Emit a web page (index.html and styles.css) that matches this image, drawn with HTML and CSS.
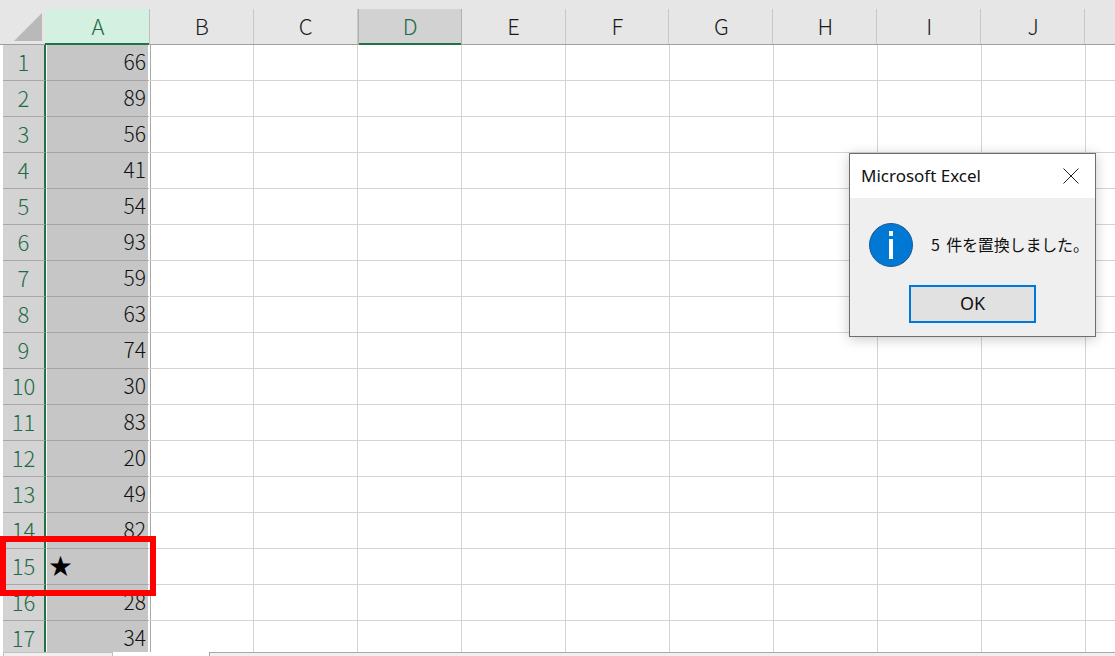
FILE: index.html
```html
<!DOCTYPE html>
<html lang="ja">
<head>
<meta charset="utf-8">
<title>Microsoft Excel</title>
<link rel="stylesheet" href="styles.css">
</head>
<body>
<main class="sheet">
  <div class="row head">
    <div class="corner"><svg class="corner-tri" width="28" height="28" viewBox="0 0 28 28"><path d="M0 28 L28 0 L28 28 Z"/></svg></div>
    <div class="ch ch-a">A</div><div class="ch">B</div><div class="ch">C</div><div class="ch ch-d">D</div><div class="ch">E</div><div class="ch">F</div><div class="ch">G</div><div class="ch">H</div><div class="ch">I</div><div class="ch">J</div><div class="ch ch-end"></div>
  </div>
  <div class="row"><div class="rh">1</div><div class="a num">66</div><div class="c"></div><div class="c"></div><div class="c"></div><div class="c"></div><div class="c"></div><div class="c"></div><div class="c"></div><div class="c"></div><div class="c"></div><div class="c end"></div></div>
  <div class="row"><div class="rh">2</div><div class="a num">89</div><div class="c"></div><div class="c"></div><div class="c"></div><div class="c"></div><div class="c"></div><div class="c"></div><div class="c"></div><div class="c"></div><div class="c"></div><div class="c end"></div></div>
  <div class="row"><div class="rh">3</div><div class="a num">56</div><div class="c"></div><div class="c"></div><div class="c"></div><div class="c"></div><div class="c"></div><div class="c"></div><div class="c"></div><div class="c"></div><div class="c"></div><div class="c end"></div></div>
  <div class="row"><div class="rh">4</div><div class="a num">41</div><div class="c"></div><div class="c"></div><div class="c"></div><div class="c"></div><div class="c"></div><div class="c"></div><div class="c"></div><div class="c"></div><div class="c"></div><div class="c end"></div></div>
  <div class="row"><div class="rh">5</div><div class="a num">54</div><div class="c"></div><div class="c"></div><div class="c"></div><div class="c"></div><div class="c"></div><div class="c"></div><div class="c"></div><div class="c"></div><div class="c"></div><div class="c end"></div></div>
  <div class="row"><div class="rh">6</div><div class="a num">93</div><div class="c"></div><div class="c"></div><div class="c"></div><div class="c"></div><div class="c"></div><div class="c"></div><div class="c"></div><div class="c"></div><div class="c"></div><div class="c end"></div></div>
  <div class="row"><div class="rh">7</div><div class="a num">59</div><div class="c"></div><div class="c"></div><div class="c"></div><div class="c"></div><div class="c"></div><div class="c"></div><div class="c"></div><div class="c"></div><div class="c"></div><div class="c end"></div></div>
  <div class="row"><div class="rh">8</div><div class="a num">63</div><div class="c"></div><div class="c"></div><div class="c"></div><div class="c"></div><div class="c"></div><div class="c"></div><div class="c"></div><div class="c"></div><div class="c"></div><div class="c end"></div></div>
  <div class="row"><div class="rh">9</div><div class="a num">74</div><div class="c"></div><div class="c"></div><div class="c"></div><div class="c"></div><div class="c"></div><div class="c"></div><div class="c"></div><div class="c"></div><div class="c"></div><div class="c end"></div></div>
  <div class="row"><div class="rh">10</div><div class="a num">30</div><div class="c"></div><div class="c"></div><div class="c"></div><div class="c"></div><div class="c"></div><div class="c"></div><div class="c"></div><div class="c"></div><div class="c"></div><div class="c end"></div></div>
  <div class="row"><div class="rh">11</div><div class="a num">83</div><div class="c"></div><div class="c"></div><div class="c"></div><div class="c"></div><div class="c"></div><div class="c"></div><div class="c"></div><div class="c"></div><div class="c"></div><div class="c end"></div></div>
  <div class="row"><div class="rh">12</div><div class="a num">20</div><div class="c"></div><div class="c"></div><div class="c"></div><div class="c"></div><div class="c"></div><div class="c"></div><div class="c"></div><div class="c"></div><div class="c"></div><div class="c end"></div></div>
  <div class="row"><div class="rh">13</div><div class="a num">49</div><div class="c"></div><div class="c"></div><div class="c"></div><div class="c"></div><div class="c"></div><div class="c"></div><div class="c"></div><div class="c"></div><div class="c"></div><div class="c end"></div></div>
  <div class="row"><div class="rh">14</div><div class="a num">82</div><div class="c"></div><div class="c"></div><div class="c"></div><div class="c"></div><div class="c"></div><div class="c"></div><div class="c"></div><div class="c"></div><div class="c"></div><div class="c end"></div></div>
  <div class="row"><div class="rh">15</div><div class="a star">★</div><div class="c"></div><div class="c"></div><div class="c"></div><div class="c"></div><div class="c"></div><div class="c"></div><div class="c"></div><div class="c"></div><div class="c"></div><div class="c end"></div></div>
  <div class="row"><div class="rh">16</div><div class="a num">28</div><div class="c"></div><div class="c"></div><div class="c"></div><div class="c"></div><div class="c"></div><div class="c"></div><div class="c"></div><div class="c"></div><div class="c"></div><div class="c end"></div></div>
  <div class="row"><div class="rh">17</div><div class="a num">34</div><div class="c"></div><div class="c"></div><div class="c"></div><div class="c"></div><div class="c"></div><div class="c"></div><div class="c"></div><div class="c"></div><div class="c"></div><div class="c end"></div></div>
</main>
<footer class="tabs"><div class="tab-left"></div><div class="tab-active"></div><div class="tab-right"></div></footer>

<div class="highlight"></div>

<section class="dialog">
  <header class="dlg-title">
    <span class="dlg-name">Microsoft Excel</span>
    <svg class="dlg-close" width="16" height="16" viewBox="0 0 16 16"><path d="M0.5 0.5 L15.5 15.5 M15.5 0.5 L0.5 15.5"/></svg>
  </header>
  <div class="dlg-body">
    <div class="dlg-msg">
      <svg class="dlg-icon" width="44" height="44" viewBox="0 0 44 44"><circle cx="22" cy="22" r="21.5" class="ic-bg"/><rect x="20" y="8" width="4" height="5" class="ic-fg"/><rect x="20" y="16" width="4" height="20" class="ic-fg"/></svg>
      <span class="dlg-text">5 件を置換しました。</span>
    </div>
    <button class="dlg-ok">OK</button>
  </div>
</section>
</body>
</html>
```
FILE: styles.css
```css
* { box-sizing: border-box; }
html, body { margin: 0; height: 656px; overflow: hidden; background: #fff; }
body { font-family: "Noto Sans CJK JP", "Noto Sans", sans-serif; font-weight: 300; color: #111; }

.sheet { height: 652px; overflow: hidden; }
.row { display: flex; height: 36px; }
.head { height: 45px; background: #e6e6e6; padding-top: 9px; border-bottom: 1px solid #a0a0a0; }

.corner { width: 45px; height: 35px; display: flex; justify-content: flex-end; align-items: flex-end; padding: 0 3px 3px 0; }
.corner-tri { display: block; fill: #b9b9b9; }

.ch { width: 104px; border-right: 1px solid #c8c8c8; display: flex; align-items: center; justify-content: center; font-size: 22px; padding-bottom: 4px; padding-left: 1px; color: #1a1a1a; line-height: 1; }
.ch-a { width: 105px; background: #d3f0e0; color: #1d6b47; box-shadow: inset 0 -2px 0 #217346; height: 36px; margin-bottom: -1px; border-right-color: #c0c0c0; padding-left: 2px; }
.ch-d { background: #d2d2d2; color: #1d6b47; box-shadow: inset 0 -2px 0 #217346; height: 36px; margin-bottom: -1px; border-left: 1px solid #b0b0b0; border-right-color: #b0b0b0; }
.ch-end { width: 30px; border-right: 0; }

.rh { width: 43px; margin-left: 3px; flex: none; background: #d3d3d3; border-bottom: 1px solid #a8a8a8; color: #1d6b47; font-size: 22px; display: flex; align-items: center; justify-content: center; line-height: 1; border-right: 2px solid #217346; padding-bottom: 4px; }

.a { width: 104px; flex: none; background: #c6c6c6; border-left: 1px solid #fff; border-right: 2px solid #fff; border-bottom: 1px solid #a5a5a5; display: flex; align-items: center; font-size: 21px; line-height: 1; box-shadow: 1px 0 0 #a8a8a8; padding-bottom: 2px; }
.num { justify-content: flex-end; padding-right: 2px; color: #111; }
.star { padding-left: 2px; padding-bottom: 4px; font-size: 23px; color: #000; }

.c { width: 104px; flex: none; border-right: 1px solid #d4d4d4; border-bottom: 1px solid #d4d4d4; }
.end { width: 30px; border-right: 0; }

.tabs { height: 4px; display: flex; background: #fff; }
.tab-left { width: 110px; background: #f0f0f0; border: 1px solid #c0c0c0; border-bottom: 0; margin-left: 3px; }
.tab-active { width: 96px; background: #fff; }
.tab-right { flex: 1; background: #f0f0f0; border-top: 1px solid #a8a8a8; border-left: 1px solid #a8a8a8; }

.highlight { position: absolute; left: 0; top: 536px; width: 156px; height: 60px; border: 6px solid #ff0000; }

.dialog { position: absolute; left: 849px; top: 153px; width: 247px; height: 184px; background: #efefef; border: 1px solid #6e6e6e; box-shadow: 0 2px 12px rgba(0,0,0,.22); font-family: "Noto Sans CJK JP", "Noto Sans", sans-serif; font-weight: 400; color: #111; display: flex; flex-direction: column; }
.dlg-title { height: 44px; flex: none; background: #fff; display: flex; align-items: center; justify-content: space-between; padding: 0 16px 0 11px; }
.dlg-name { font-size: 17px; font-family: "Noto Sans", sans-serif; padding-bottom: 2px; }
.dlg-close { stroke: #222; stroke-width: 1; fill: none; margin-bottom: 1px; }
.dlg-body { flex: 1; display: flex; flex-direction: column; align-items: center; padding-top: 25px; }
.dlg-msg { display: flex; align-items: center; gap: 18px; align-self: flex-start; padding-left: 19px; }
.ic-bg { fill: #0078d4; stroke: #1a5c96; stroke-width: 1; }
.ic-fg { fill: #fff; }
.dlg-text { font-size: 16px; white-space: nowrap; word-spacing: 3px; letter-spacing: -0.15px; padding-bottom: 2px; }
.dlg-ok { margin-top: 18px; width: 127px; height: 38px; background: #e1e1e1; border: 2px solid #0078d7; font: 400 18px "Noto Sans", sans-serif; color: #111; padding: 0 0 2px; }
```
